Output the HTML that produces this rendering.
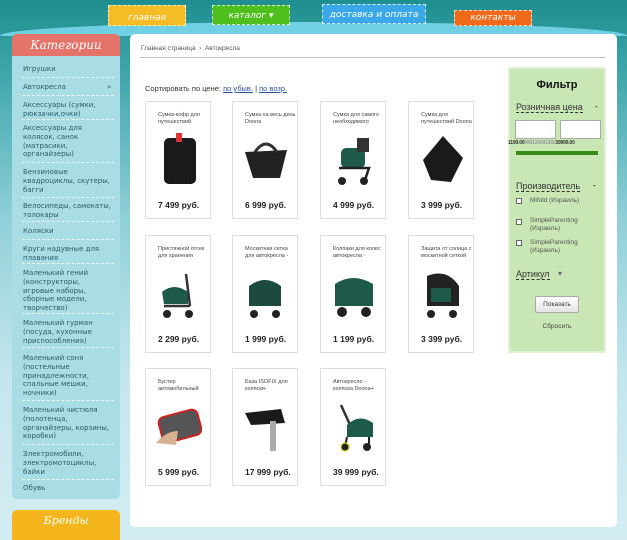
<!DOCTYPE html>
<html><head><meta charset="utf-8"><style>
*{margin:0;padding:0;box-sizing:border-box}
body{width:627px;height:540px;overflow:hidden;font-family:"Liberation Sans","DejaVu Sans",sans-serif;background:linear-gradient(180deg,#1f8e8e 0%,#3aa3a8 12%,#8fcfd8 40%,#c4e6ee 70%,#d3edf3 100%);position:relative}
.tab{position:absolute;height:20px;color:#fff;font-style:italic;font-size:9px;text-align:center;line-height:20px;border:1px dashed rgba(255,255,255,.8);font-family:"DejaVu Sans",sans-serif}
.wave{position:absolute;left:0;top:22px;width:627px;height:14px;background:#6fd0e3;border-radius:50% 50% 0 0/100% 100% 0 0}
.side{position:absolute;left:12px;top:34px;width:108px;height:465px;background:#a9dde5;border-radius:5px}
.sh{height:22px;background:#e4736a;border-radius:5px 5px 0 0;color:#fff;font-style:italic;font-size:12px;text-align:center;line-height:22px;font-family:"DejaVu Serif",serif}
.it{position:absolute;left:23px;width:88px;font-family:"DejaVu Sans",sans-serif;font-size:7px;line-height:8.8px;color:#2d5d66}
.sep{position:absolute;left:22px;width:92px;border-top:1px dashed #e8f6f8}
.brand{position:absolute;left:12px;top:510px;width:108px;height:30px;background:#f4b61c;border-radius:5px 5px 0 0;color:#fff;font-style:italic;font-size:11px;text-align:center;line-height:22px;font-family:"DejaVu Serif",serif}
.main{position:absolute;left:130px;top:34px;width:487px;height:493px;background:#fff;border-radius:5px}
.bc{position:absolute;left:141px;top:45px;font-size:6.5px;color:#555}
.line{position:absolute;left:140px;top:57px;width:465px;border-top:1px solid #bbb}
.sort{position:absolute;left:145px;top:84px;font-size:7.5px;color:#333}
.sort a{color:#2a4fa0;text-decoration:underline}
.card{position:absolute;width:66px;height:118px;border:1px solid #ddd;background:#fff}
.card .t{position:absolute;left:12px;top:10px;width:52px;font-size:5.5px;line-height:6.5px;color:#444}
.card .p{position:absolute;left:12px;top:98px;font-size:8.5px;font-weight:bold;color:#222}
.card svg{position:absolute;left:10px;top:28px}
.filt{position:absolute;left:508px;top:67px;width:98px;height:286px;background:#c9e6b5;border:2px solid #dff0d3}
.fl{position:absolute;font-size:9px;color:#333;border-bottom:1px dashed #333;line-height:10px}
.in{position:absolute;width:41px;height:19px;background:#fff;border:1px solid #aaa}
.cb{position:absolute;left:6px;width:6px;height:6px;border:1px solid #666;background:#fff}
.ct{position:absolute;left:20px;font-size:6.5px;line-height:8px;color:#555}
</style></head><body>
<div class="wave"></div>
<div class="tab" style="left:108px;top:5px;width:78px;height:21px;background:#f4bd25;line-height:24px">главная</div>
<div class="tab" style="left:212px;top:5px;width:78px;background:#4fbf1e">каталог ▾</div>
<div class="tab" style="left:322px;top:4px;width:104px;background:#3aa7e8">доставка и оплата</div>
<div class="tab" style="left:454px;top:10px;width:78px;height:16px;line-height:15px;background:#f1691b">контакты</div>

<div class="side"><div class="sh">Категории</div></div>
<div class="it" style="top:65px">Игрушки</div><div class="sep" style="top:77px"></div>
<div class="it" style="top:83px">Автокресла <span style="position:absolute;left:84px">»</span></div><div class="sep" style="top:95px"></div>
<div class="it" style="top:101px">Аксессуары (сумки, рюкзачки,очки)</div><div class="sep" style="top:119px"></div>
<div class="it" style="top:124px">Аксессуары для колясок, санок (матрасики, органайзеры)</div><div class="sep" style="top:162px"></div>
<div class="it" style="top:168px">Бензиновые квадроциклы, скутеры, багги</div><div class="sep" style="top:197px"></div>
<div class="it" style="top:202px">Велосипеды, самокаты, толокары</div><div class="sep" style="top:221px"></div>
<div class="it" style="top:227px">Коляски</div><div class="sep" style="top:239px"></div>
<div class="it" style="top:245px">Круги надувные для плавания</div><div class="sep" style="top:263px"></div>
<div class="it" style="top:269px">Маленький гений (конструкторы, игровые наборы, сборные модели, творчество)</div><div class="sep" style="top:313px"></div>
<div class="it" style="top:319px">Маленький гурман (посуда, кухонные приспособления)</div><div class="sep" style="top:347px"></div>
<div class="it" style="top:354px">Маленький соня (постельные принадлежности, спальные мешки, ночники)</div><div class="sep" style="top:400px"></div>
<div class="it" style="top:406px">Маленький чистюля (полотенца, органайзеры, корзины, коробки)</div><div class="sep" style="top:444px"></div>
<div class="it" style="top:450px">Электромобили, электромотоциклы, байки</div><div class="sep" style="top:479px"></div>
<div class="it" style="top:484px">Обувь</div>
<div class="brand">Бренды</div>

<div class="main"></div>
<div class="bc">Главная страница &nbsp;›&nbsp; Автокресла</div>
<div class="line"></div>
<div class="sort">Сортировать по цене: <a>по убыв.</a> | <a>по возр.</a></div>

<div class="card" style="left:145px;top:101px"><div class="t">Сумка-кофр для путешествий</div><svg width="46" height="60"><rect x="8" y="8" width="32" height="46" rx="5" fill="#1a1a1a"/><rect x="20" y="3" width="6" height="9" fill="#d33"/></svg><div class="p">7 499 руб.</div></div>
<div class="card" style="left:232px;top:101px"><div class="t">Сумка на весь день Doona</div><svg width="46" height="60"><path d="M2 22 L44 20 L37 48 L10 48Z" fill="#222"/><path d="M12 22 Q23 6 34 22" stroke="#333" stroke-width="3" fill="none"/></svg><div class="p">6 999 руб.</div></div>
<div class="card" style="left:320px;top:101px"><div class="t">Сумка для самого необходимого</div><svg width="46" height="60"><rect x="10" y="18" width="24" height="20" rx="5" fill="#1d5a4a"/><path d="M8 38 L38 38 L34 50" stroke="#222" stroke-width="2.5" fill="none"/><circle cx="11" cy="51" r="4" fill="#222"/><circle cx="33" cy="51" r="4" fill="#222"/><rect x="26" y="8" width="12" height="14" fill="#333"/></svg><div class="p">4 999 руб.</div></div>
<div class="card" style="left:408px;top:101px"><div class="t">Сумка для путешествий Doona</div><svg width="46" height="60"><path d="M4 30 L24 6 L44 28 L32 52 L12 50Z" fill="#1a1a1a"/></svg><div class="p">3 999 руб.</div></div>

<div class="card" style="left:145px;top:235px"><div class="t">Пристяжной отсек для хранения</div><svg width="46" height="60"><path d="M6 28 Q18 18 32 28 L32 40 L8 40Z" fill="#1d5a4a"/><path d="M30 10 L34 42 M8 42 L34 42" stroke="#333" stroke-width="2.5"/><circle cx="11" cy="50" r="4" fill="#222"/><circle cx="33" cy="50" r="4" fill="#222"/></svg><div class="p">2 299 руб.</div></div>
<div class="card" style="left:232px;top:235px"><div class="t">Москитная сетка для автокресла -</div><svg width="46" height="60"><path d="M6 22 Q22 10 38 22 L38 42 L6 42Z" fill="#1d4a40"/><circle cx="11" cy="50" r="4" fill="#222"/><circle cx="33" cy="50" r="4" fill="#222"/></svg><div class="p">1 999 руб.</div></div>
<div class="card" style="left:320px;top:235px"><div class="t">Колпаки для колес автокресла -</div><svg width="46" height="60"><path d="M4 20 Q22 8 42 20 L42 42 L4 42Z" fill="#1d5a4a"/><circle cx="11" cy="48" r="5" fill="#222"/><circle cx="35" cy="48" r="5" fill="#222"/></svg><div class="p">1 199 руб.</div></div>
<div class="card" style="left:408px;top:235px"><div class="t">Защита от солнца с москитной сеткой</div><svg width="46" height="60"><path d="M8 12 Q28 4 40 22 L40 42 L8 42Z" fill="#222"/><rect x="12" y="24" width="20" height="14" fill="#1d5a4a"/><circle cx="12" cy="50" r="4" fill="#222"/><circle cx="34" cy="50" r="4" fill="#222"/></svg><div class="p">3 399 руб.</div></div>

<div class="card" style="left:145px;top:368px"><div class="t">Бустер автомобильный</div><svg width="46" height="60"><rect x="4" y="16" width="40" height="26" rx="6" fill="#555" stroke="#c22" stroke-width="2" transform="rotate(-15 24 29)"/><path d="M0 46 Q10 34 22 34 L20 48Z" fill="#d8b090"/></svg><div class="p">5 999 руб.</div></div>
<div class="card" style="left:232px;top:368px"><div class="t">База ISOFIX для коляски-</div><svg width="46" height="60"><path d="M2 16 L38 12 L42 26 L8 28Z" fill="#1a1a1a"/><rect x="27" y="24" width="6" height="30" fill="#aaa"/></svg><div class="p">17 999 руб.</div></div>
<div class="card" style="left:320px;top:368px"><div class="t">Автокресло - коляска Doona+</div><svg width="46" height="60"><path d="M10 8 L20 30" stroke="#333" stroke-width="2.5"/><path d="M16 28 Q28 16 42 26 L42 40 L16 40Z" fill="#1d5a4a"/><path d="M16 40 L14 50 M38 40 L38 50" stroke="#222" stroke-width="2"/><circle cx="14" cy="50" r="4" fill="#222" stroke="#cc2" stroke-width="1.2"/><circle cx="36" cy="50" r="4" fill="#222"/></svg><div class="p">39 999 руб.</div></div>

<div class="filt">
<div style="position:absolute;left:0;width:94px;top:10px;text-align:center;font-weight:bold;font-size:11px;color:#111">Фильтр</div>
<div class="fl" style="left:6px;top:33px">Розничная цена</div><div style="position:absolute;left:85px;top:33px;font-size:8px">-</div>
<div class="in" style="left:5px;top:51px"></div><div class="in" style="left:50px;top:51px"></div>
<div style="position:absolute;left:-2px;top:71px;font-size:5px;font-weight:bold;color:#333;letter-spacing:-.2px">1199.00<span style="color:#999">089120591302</span>39999.00</div>
<div style="position:absolute;left:6px;top:82px;width:82px;height:4px;background:#3a8a1a"></div>
<div class="fl" style="left:6px;top:112px">Производитель</div><div style="position:absolute;left:83px;top:112px;font-size:8px">-</div>
<div class="cb" style="top:129px"></div><div class="ct" style="top:128px">Mifold (Израиль)</div>
<div class="cb" style="top:150px"></div><div class="ct" style="top:148px">SimpleParenting (Израиль)</div>
<div class="cb" style="top:171px"></div><div class="ct" style="top:170px">SimpleParenting (Израиль)</div>
<div class="fl" style="left:6px;top:200px">Артикул</div><div style="position:absolute;left:48px;top:200px;font-size:8px;color:#666">▾</div>
<div style="position:absolute;left:25px;top:227px;width:44px;height:17px;background:linear-gradient(#fff,#e4e4e4);border:1px solid #aaa;border-radius:2px;font-size:6.5px;text-align:center;line-height:15px;color:#333">Показать</div>
<div style="position:absolute;left:0;width:94px;top:254px;text-align:center;font-size:6.5px;color:#444">Сбросить</div>
</div>
</body></html>
